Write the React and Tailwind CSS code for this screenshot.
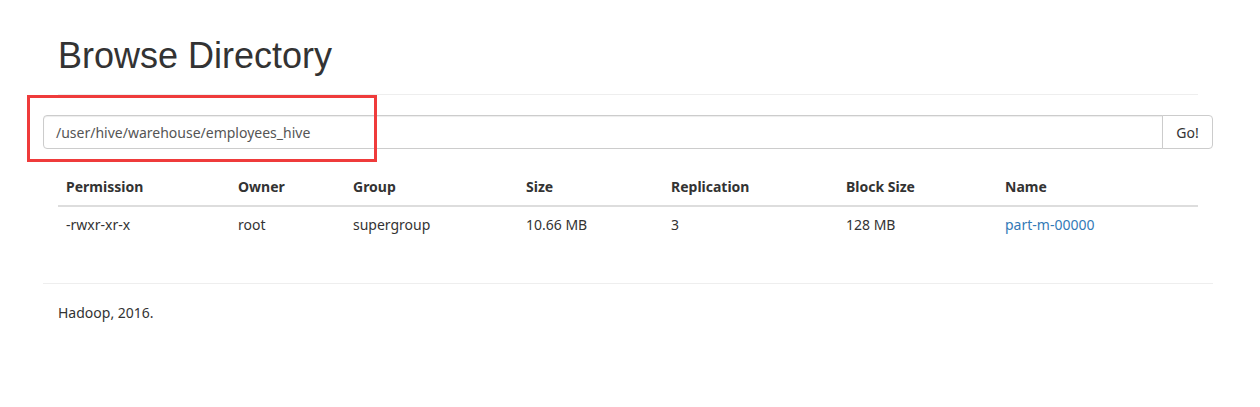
const cols = [
  { label: "Permission", w: "w-[172px]", value: "-rwxr-xr-x" },
  { label: "Owner", w: "w-[115px]", value: "root" },
  { label: "Group", w: "w-[173px]", value: "supergroup" },
  { label: "Size", w: "w-[145px]", value: "10.66 MB" },
  { label: "Replication", w: "w-[175px]", value: "3" },
  { label: "Block Size", w: "w-[159px]", value: "128 MB" },
  { label: "Name", w: "", value: "part-m-00000", link: true },
];

export default function App() {
  return (
    <div className="min-h-[407px] bg-white font-['Noto_Sans',sans-serif] text-[14px] text-[#333]">
      <div className="relative ml-[43px] w-[1170px] px-[15px] pt-[23px]">
        {/* page header */}
        <div className="border-b border-[#eee] pb-[16px]">
          <h1 className="font-['Liberation_Sans',sans-serif] text-[36px] leading-[44px] pt-[11px] text-[#333]">
            Browse Directory
          </h1>
        </div>

        {/* path form */}
        <div className="-mx-[15px] mt-[20px] flex h-[34px]">
          <div className="flex flex-1 items-center rounded-l-[4px] border border-[#ccc] px-[12px] text-[14px] text-[#555] shadow-[inset_0_1px_1px_rgba(0,0,0,0.075)]">
            /user/hive/warehouse/employees_hive
          </div>
          <button className="-ml-px w-[51px] rounded-r-[4px] border border-[#ccc] bg-white text-[14px] text-[#333]">
            Go!
          </button>
        </div>

        {/* annotation box */}
        <div className="absolute left-[-16px] top-[95px] h-[67px] w-[350px] border-[3px] border-[#ef3b3b]" />

        {/* listing */}
        <table className="mt-[20px] w-full border-collapse">
          <thead>
            <tr className="border-b-2 border-[#ddd]">
              {cols.map((c) => (
                <th key={c.label} className={`${c.w} px-[8px] py-[8px] text-left font-bold leading-[20px]`}>
                  {c.label}
                </th>
              ))}
            </tr>
          </thead>
          <tbody>
            <tr>
              {cols.map((c) => (
                <td key={c.label} className="px-[8px] py-[8px] leading-[20px]">
                  {c.link ? <span className="text-[#337ab7]">{c.value}</span> : c.value}
                </td>
              ))}
            </tr>
          </tbody>
        </table>

        {/* footer */}
        <div className="-mx-[15px] mt-[40px] border-t border-[#eee]" />
        <p className="mt-[19px] leading-[20px]">Hadoop, 2016.</p>
      </div>
    </div>
  );
}
